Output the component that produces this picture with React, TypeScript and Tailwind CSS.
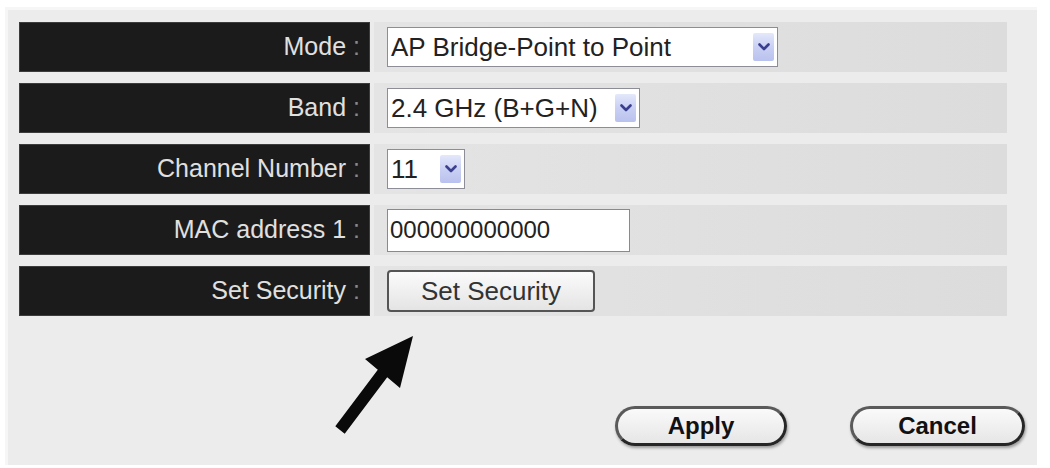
import React from "react";

const font = { fontFamily: '"Liberation Sans", Arial, sans-serif' };

function DropArrow() {
  return (
    <span className="ml-auto flex h-[28px] w-[21px] shrink-0 items-center justify-center rounded-[2px] bg-gradient-to-b from-[#e4e8fb] via-[#c9d0f3] to-[#b9c2ee]">
      <svg width="12" height="8" viewBox="0 0 12 8">
        <path d="M1.5 1.5 L6 6 L10.5 1.5" fill="none" stroke="#3b3f8f" strokeWidth="2.6" strokeLinecap="round" strokeLinejoin="round" />
      </svg>
    </span>
  );
}

function Select({ value, width }: { value: string; width: string }) {
  return (
    <div className={`flex h-[40px] items-center border border-[#8d8d98] bg-white pl-[3px] pr-[3px] text-[26px] text-[#222] ${width}`}>
      <span className="whitespace-nowrap leading-none">{value}</span>
      <DropArrow />
    </div>
  );
}

function Row({ label, children }: { label: string; children: React.ReactNode }) {
  return (
    <div className="flex h-[50px] gap-[4px]">
      <div className="flex w-[351px] items-center justify-end border border-[#3c3c3c] bg-[#1b1b1b] pr-[9px] text-[25px] text-[#e0e0e0]">
        <span className="whitespace-nowrap">{label}</span>
        <span className="ml-[7px] text-[#8a8a8a]">:</span>
      </div>
      <div className="flex flex-1 items-center bg-gradient-to-r from-[#e4e4e4] to-[#dcdcdc] pl-[13px]">{children}</div>
    </div>
  );
}

function PillButton({ label, width }: { label: string; width: string }) {
  return (
    <button className={`flex h-[40px] shrink-0 items-center justify-center rounded-full border-[3px] border-[#5a5a5a] border-b-[#262626] border-r-[#262626] bg-gradient-to-b from-[#fafafa] to-[#e6e6e6] text-[24px] font-bold text-[#111] shadow-[1px_2px_3px_rgba(0,0,0,0.35)] ${width}`}>
      {label}
    </button>
  );
}

export default function App() {
  return (
    <div className="relative h-[468px] w-[1050px] bg-white pb-[3px] pl-[5px] pr-[13px] pt-[7px]" style={font}>
      <div className="flex h-full flex-col border-l-[3px] border-t-[3px] border-[#f6f6f6] bg-[#ececec] pl-[11px] pr-[30px] pt-[12px]">
        <div className="flex flex-col gap-[11px]">
          <Row label="Mode">
            <Select value="AP Bridge-Point to Point" width="w-[391px]" />
          </Row>
          <Row label="Band">
            <Select value="2.4 GHz (B+G+N)" width="w-[253px]" />
          </Row>
          <Row label="Channel Number">
            <Select value="11" width="w-[78px]" />
          </Row>
          <Row label="MAC address 1">
            <div className="flex h-[43px] w-[243px] items-center border border-[#8a8a8a] bg-white pl-[2px] text-[24px] text-[#222]">
              000000000000
            </div>
          </Row>
          <Row label="Set Security">
            <button className="flex h-[42px] w-[208px] items-center justify-center rounded-[4px] border-[2px] border-[#555] bg-gradient-to-b from-[#fbfbfb] to-[#e4e4e4] text-[26px] text-[#333]">
              Set Security
            </button>
          </Row>
        </div>
        <div className="mt-[90px] flex gap-[63px] pl-[596px]">
          <PillButton label="Apply" width="w-[172px]" />
          <PillButton label="Cancel" width="w-[175px]" />
        </div>
      </div>
      <svg className="absolute left-[330px] top-[330px]" width="95" height="110" viewBox="0 0 95 110">
        <polygon points="83,6 70,58 57.2,47.2 14.7,103.7 5.3,96.3 47.8,39.8 35,29" fill="#0a0a0a" />
      </svg>
    </div>
  );
}
